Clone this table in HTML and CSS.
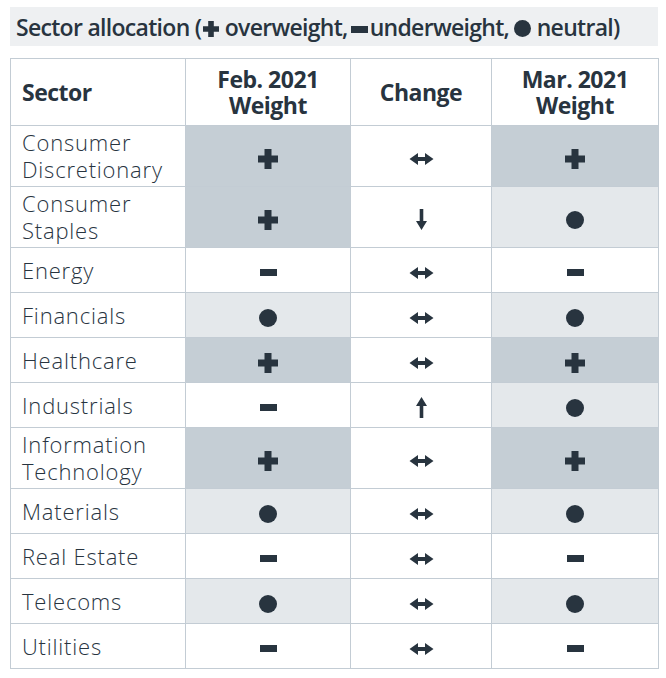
FILE: index.html
```html
<!DOCTYPE html>
<html>
<head>
<meta charset="utf-8">
<link rel="stylesheet" href="styles.css">
</head>
<body>
<svg width="0" height="0" class="defs">
  <defs>
    <symbol id="plus" viewBox="0 0 20 20"><path d="M6.5 0h7v6.5H20v7h-6.5V20h-7v-6.5H0v-7h6.5z"/></symbol>
    <symbol id="minus" viewBox="0 0 17 7"><rect width="17" height="7"/></symbol>
    <symbol id="dot" viewBox="0 0 18 18"><circle cx="9" cy="9" r="9"/></symbol>
    <symbol id="both" viewBox="0 0 24 12"><path d="M0 6L8.5 0v4h7V0L24 6l-8.5 6V8h-7v4z"/></symbol>
    <symbol id="down" viewBox="0 0 11 21"><path d="M3.7 0h3.6v12h3.7l-5.5 9L0 12h3.7z"/></symbol>
    <symbol id="up" viewBox="0 0 11 21"><path d="M3.7 21h3.6V9h3.7L5.5 0 0 9h3.7z"/></symbol>
  </defs>
</svg>
<div class="page">
  <div class="title">Sector allocation (<svg class="t-plus"><use href="#plus"/></svg> overweight,<svg class="t-minus"><use href="#minus"/></svg>underweight, <svg class="t-dot"><use href="#dot"/></svg> neutral)</div>
  <table class="alloc">
    <colgroup>
      <col class="c1"><col class="c2"><col class="c3"><col class="c4">
    </colgroup>
    <thead>
      <tr><th class="name">Sector</th><th>Feb. 2021<br>Weight</th><th>Change</th><th>Mar. 2021<br>Weight</th></tr>
    </thead>
    <tbody>
      <tr class="two"><td class="name">Consumer<br>Discretionary</td><td class="dark"><svg class="i-plus"><use href="#plus"/></svg></td><td><svg class="i-both"><use href="#both"/></svg></td><td class="dark"><svg class="i-plus"><use href="#plus"/></svg></td></tr>
      <tr class="two"><td class="name">Consumer<br>Staples</td><td class="dark"><svg class="i-plus"><use href="#plus"/></svg></td><td><svg class="i-arrow"><use href="#down"/></svg></td><td class="light"><svg class="i-dot"><use href="#dot"/></svg></td></tr>
      <tr><td class="name">Energy</td><td><svg class="i-minus"><use href="#minus"/></svg></td><td><svg class="i-both"><use href="#both"/></svg></td><td><svg class="i-minus"><use href="#minus"/></svg></td></tr>
      <tr><td class="name">Financials</td><td class="light"><svg class="i-dot"><use href="#dot"/></svg></td><td><svg class="i-both"><use href="#both"/></svg></td><td class="light"><svg class="i-dot"><use href="#dot"/></svg></td></tr>
      <tr><td class="name">Healthcare</td><td class="dark"><svg class="i-plus"><use href="#plus"/></svg></td><td><svg class="i-both"><use href="#both"/></svg></td><td class="dark"><svg class="i-plus"><use href="#plus"/></svg></td></tr>
      <tr><td class="name">Industrials</td><td><svg class="i-minus"><use href="#minus"/></svg></td><td><svg class="i-arrow"><use href="#up"/></svg></td><td class="light"><svg class="i-dot"><use href="#dot"/></svg></td></tr>
      <tr class="two"><td class="name">Information<br>Technology</td><td class="dark"><svg class="i-plus"><use href="#plus"/></svg></td><td><svg class="i-both"><use href="#both"/></svg></td><td class="dark"><svg class="i-plus"><use href="#plus"/></svg></td></tr>
      <tr><td class="name">Materials</td><td class="light"><svg class="i-dot"><use href="#dot"/></svg></td><td><svg class="i-both"><use href="#both"/></svg></td><td class="light"><svg class="i-dot"><use href="#dot"/></svg></td></tr>
      <tr><td class="name">Real Estate</td><td><svg class="i-minus"><use href="#minus"/></svg></td><td><svg class="i-both"><use href="#both"/></svg></td><td><svg class="i-minus"><use href="#minus"/></svg></td></tr>
      <tr><td class="name">Telecoms</td><td class="light"><svg class="i-dot"><use href="#dot"/></svg></td><td><svg class="i-both"><use href="#both"/></svg></td><td class="light"><svg class="i-dot"><use href="#dot"/></svg></td></tr>
      <tr><td class="name">Utilities</td><td><svg class="i-minus"><use href="#minus"/></svg></td><td><svg class="i-both"><use href="#both"/></svg></td><td><svg class="i-minus"><use href="#minus"/></svg></td></tr>
    </tbody>
  </table>
</div>
</body>
</html>
```
FILE: styles.css
```css
html, body {
  margin: 0;
  padding: 0;
  background: #ffffff;
}
.defs {
  position: absolute;
  width: 0;
  height: 0;
}
.page {
  padding: 7px 8px 0 10px;
  font-family: "Open Sans", "Noto Sans", sans-serif;
  color: #28343f;
  fill: #28343f;
}
.title {
  background: #eef0f2;
  height: 39px;
  line-height: 40px;
  padding-left: 6px;
  font-size: 23px;
  font-weight: 600;
  letter-spacing: -0.7px;
  white-space: nowrap;
}
.title svg {
  vertical-align: -1px;
}
.t-plus { width: 16px; height: 16px; margin-left: 2px; }
.t-minus { width: 17px; height: 7px; vertical-align: 3px !important; margin: 0 2px 0 3px; }
.t-dot { width: 17px; height: 17px; }
.alloc {
  margin-top: 12px;
  width: 648px;
  border-collapse: collapse;
  table-layout: fixed;
}
.c1 { width: 175px; }
.c2 { width: 165px; }
.c3 { width: 141px; }
.c4 { width: 167px; }
.alloc th, .alloc td {
  border: 1px solid #c3ccd4;
  text-align: center;
  vertical-align: middle;
  padding: 0 11px;
}
.alloc th {
  height: 66px;
  font-size: 23px;
  font-weight: 700;
  letter-spacing: -0.5px;
  line-height: 26px;
}
.alloc td {
  height: 44px;
  font-size: 22px;
  font-weight: 300;
  letter-spacing: 0.8px;
  line-height: 27px;
}
.alloc tr.two td {
  height: 60px;
}
.alloc .name {
  text-align: left;
}
.alloc td.dark { background: #c5ced5; }
.alloc td.light { background: #e4e8eb; }
.alloc svg { display: inline-block; vertical-align: middle; }
.i-plus { width: 20px; height: 20px; }
.i-minus { width: 17px; height: 7px; }
.i-dot { width: 18px; height: 18px; }
.i-both { width: 25px; height: 12px; }
.i-arrow { width: 11px; height: 21px; }
```
